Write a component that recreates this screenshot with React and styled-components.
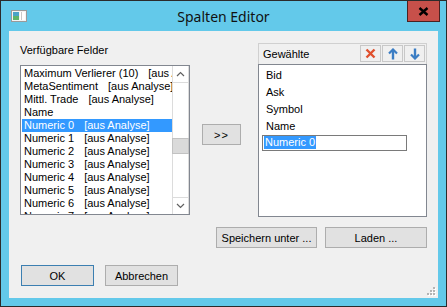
import React from "react";
import styled, { createGlobalStyle } from "styled-components";

const GlobalStyle = createGlobalStyle`
  html, body {
    margin: 0;
    padding: 0;
    background: #ffffff;
  }

  body {
    font-family: "Liberation Sans", Arial, sans-serif;
    font-size: 11px;
    color: #000;
  }
`;

const Window = styled.div`
  background: #63c9ea;
  border: 1px solid #2b2b2b;
  box-sizing: border-box;
  display: flex;
  flex-direction: column;
  height: 307px;
  width: 447px;
`;

const TitleBar = styled.div`
  align-items: center;
  display: grid;
  grid-template-columns: 1fr auto 1fr;
  height: 30px;
`;

const TitleIcon = styled.div`
  display: flex;
  padding-left: 10px;
`;

const Title = styled.div`
  color: #111;
  font-family: "Noto Sans", "Open Sans", sans-serif;
  font-size: 14px;
`;

const CloseButton = styled.div`
  align-items: center;
  align-self: start;
  background: #c7504a;
  border: 1px solid #4a2222;
  border-top: none;
  box-sizing: border-box;
  display: flex;
  height: 21px;
  justify-content: center;
  justify-self: end;
  margin-right: 6px;
  width: 33px;
`;

const Client = styled.div`
  background: #f0f0f0;
  box-sizing: border-box;
  display: flex;
  flex: 1;
  flex-direction: column;
  margin: 0 8px 8px 8px;
  padding: 12px 11px 0 11px;
  position: relative;
`;

const TopRow = styled.div`
  align-items: flex-start;
  display: flex;
`;

const LeftColumn = styled.div`
  display: flex;
  flex-direction: column;
  width: 170px;
`;

const Caption = styled.div`
  line-height: 13px;
  margin: 1px 0 8px 0;
`;

const ListBox = styled.div`
  background: #fff;
  border: 1px solid #828790;
  box-sizing: border-box;
  display: flex;
  height: 150px;
`;

const Rows = styled.div`
  flex: 1;
  overflow: hidden;
  padding: 1px 0 0 1px;
`;

const Row = styled.div`
  background: ${({ $selected }) => ($selected ? "#3399ff" : "transparent")};
  color: ${({ $selected }) => ($selected ? "#fff" : "#000")};
  height: 13px;
  line-height: 13px;
  overflow: hidden;
  padding-left: 2px;
  white-space: nowrap;
`;

const Tag = styled.span`
  margin-left: 10px;
`;

const ScrollBar = styled.div`
  background: #fff;
  border-left: 1px solid #dcdcdc;
  border-right: 1px solid #dcdcdc;
  box-sizing: border-box;
  display: flex;
  flex-direction: column;
  width: 17px;
`;

const ScrollArrow = styled.div`
  align-items: center;
  border-bottom: ${({ $down }) => ($down ? "none" : "1px solid #dcdcdc")};
  border-top: ${({ $down }) => ($down ? "1px solid #dcdcdc" : "none")};
  box-sizing: border-box;
  display: flex;
  height: 17px;
  justify-content: center;
`;

const ScrollTrack = styled.div`
  flex: 1;
  padding-top: 55px;
`;

const Thumb = styled.div`
  background: #dadada;
  border: 1px solid #c2c2c2;
  box-sizing: border-box;
  height: 16px;
  margin: 0 -1px;
`;

const Button = styled.div`
  align-items: center;
  background: #e1e1e1;
  border: 1px solid ${({ $default }) => ($default ? "#3c7fb1" : "#adadad")};
  box-sizing: border-box;
  display: flex;
  height: ${({ $height }) => $height || 21}px;
  justify-content: center;
  width: ${({ $width }) => $width}px;
`;

const MoveButton = styled(Button)`
  margin: 81px 0 0 12px;
  letter-spacing: 1px;
`;

const RightPanel = styled.div`
  display: flex;
  flex-direction: column;
  margin-left: 17px;
  width: 169px;
`;

const PanelHeader = styled.div`
  align-items: flex-start;
  border: 1px solid #d0d0d0;
  border-bottom: none;
  box-sizing: border-box;
  display: flex;
  height: 21px;
  justify-content: space-between;
  padding: 1px 1px 0 4px;
`;

const HeaderLabel = styled.div`
  line-height: 19px;
`;

const ToolGroup = styled.div`
  display: flex;
  gap: 1px;
`;

const ToolButton = styled.div`
  align-items: center;
  border: 1px solid #c8c8c8;
  box-sizing: border-box;
  display: flex;
  height: 17px;
  justify-content: center;
  width: 21px;
`;

const SelectedList = styled.div`
  background: #fff;
  border: 1px solid #828790;
  box-sizing: border-box;
  height: 153px;
  padding: 2px 0 0 3px;
`;

const SelectedRow = styled.div`
  height: 17px;
  line-height: 17px;
  padding-left: 4px;
`;

const EditBox = styled.div`
  background: #fff;
  border: 1px solid #7a7a7a;
  box-sizing: border-box;
  height: 16px;
  padding: 0 0 0 1px;
  width: 145px;
`;

const EditSelection = styled.span`
  background: #3399ff;
  color: #fff;
  display: inline-block;
  line-height: 13px;
  padding: 0 1px;
`;

const ActionRow = styled.div`
  display: flex;
  gap: 8px;
  justify-content: flex-end;
  margin-top: 10px;
`;

const DialogRow = styled.div`
  display: flex;
  gap: 11px;
  margin-top: 17px;
  padding-left: 1px;
`;

const Grip = styled.div`
  bottom: 2px;
  display: flex;
  position: absolute;
  right: 2px;
`;

const fields = [
  { name: "Maximum Verlierer (10)", tag: "[aus Analyse]" },
  { name: "MetaSentiment", tag: "[aus Analyse]" },
  { name: "Mittl. Trade", tag: "[aus Analyse]" },
  { name: "Name" },
  { name: "Numeric 0", tag: "[aus Analyse]", selected: true },
  { name: "Numeric 1", tag: "[aus Analyse]" },
  { name: "Numeric 2", tag: "[aus Analyse]" },
  { name: "Numeric 3", tag: "[aus Analyse]" },
  { name: "Numeric 4", tag: "[aus Analyse]" },
  { name: "Numeric 5", tag: "[aus Analyse]" },
  { name: "Numeric 6", tag: "[aus Analyse]" },
  { name: "Numeric 7", tag: "[aus Analyse]" },
];

const chosen = ["Bid", "Ask", "Symbol", "Name"];

const AppIcon = () => (
  <svg width="16" height="12" viewBox="0 0 16 12">
    <rect x="0.5" y="0.5" width="15" height="11" fill="#f4f4f4" stroke="#9a9a9a" />
    <rect x="2" y="2" width="6" height="8" fill="#4aa3c8" />
    <rect x="2" y="6" width="6" height="4" fill="#5fb46a" />
    <rect x="9" y="2" width="5" height="8" fill="#ffffff" />
    <rect x="10" y="2" width="1" height="8" fill="#c8c8c8" />
  </svg>
);

const CloseGlyph = () => (
  <svg width="11" height="9" viewBox="0 0 11 9">
    <path d="M1.5 1 L9.5 8 M9.5 1 L1.5 8" stroke="#000" strokeWidth="2.4" />
  </svg>
);

const Chevron = ({ down }) => (
  <svg width="9" height="6" viewBox="0 0 9 6">
    <polyline
      points={down ? "1,1 4.5,4.5 8,1" : "1,5 4.5,1.5 8,5"}
      fill="none"
      stroke="#606060"
      strokeWidth="1.2"
    />
  </svg>
);

const RemoveIcon = () => (
  <svg width="11" height="11" viewBox="0 0 11 11">
    <path d="M1.5 1.5 L9.5 9.5 M9.5 1.5 L1.5 9.5" stroke="#e0502e" strokeWidth="2.4" />
  </svg>
);

const ArrowIcon = ({ down }) => (
  <svg width="10" height="12" viewBox="0 0 10 12">
    <g transform={down ? "rotate(180 5 6)" : undefined}>
      <polyline points="1,5.5 5,1.5 9,5.5" fill="none" stroke="#3b7dc4" strokeWidth="2.2" />
      <line x1="5" y1="2" x2="5" y2="11.5" stroke="#3b7dc4" strokeWidth="2.4" />
    </g>
  </svg>
);

const GripIcon = () => (
  <svg width="10" height="10" viewBox="0 0 10 10">
    {[
      [7, 1],
      [4, 4],
      [7, 4],
      [1, 7],
      [4, 7],
      [7, 7],
    ].map(([x, y]) => (
      <g key={`${x}-${y}`}>
        <rect x={x + 1} y={y + 1} width="2" height="2" fill="#ffffff" />
        <rect x={x} y={y} width="2" height="2" fill="#b4b4b4" />
      </g>
    ))}
  </svg>
);

export default function App() {
  return (
    <>
      <GlobalStyle />
      <Window>
        <TitleBar>
          <TitleIcon>
            <AppIcon />
          </TitleIcon>
          <Title>Spalten Editor</Title>
          <CloseButton>
            <CloseGlyph />
          </CloseButton>
        </TitleBar>

        <Client>
          <TopRow>
            <LeftColumn>
              <Caption>Verfügbare Felder</Caption>
              <ListBox>
                <Rows>
                  {fields.map((f) => (
                    <Row key={f.name} $selected={f.selected}>
                      {f.name}
                      {f.tag && <Tag>{f.tag}</Tag>}
                    </Row>
                  ))}
                </Rows>
                <ScrollBar>
                  <ScrollArrow>
                    <Chevron />
                  </ScrollArrow>
                  <ScrollTrack>
                    <Thumb />
                  </ScrollTrack>
                  <ScrollArrow $down>
                    <Chevron down />
                  </ScrollArrow>
                </ScrollBar>
              </ListBox>
            </LeftColumn>

            <MoveButton $width={39}>&gt;&gt;</MoveButton>

            <RightPanel>
              <PanelHeader>
                <HeaderLabel>Gewählte</HeaderLabel>
                <ToolGroup>
                  <ToolButton>
                    <RemoveIcon />
                  </ToolButton>
                  <ToolButton>
                    <ArrowIcon />
                  </ToolButton>
                  <ToolButton>
                    <ArrowIcon down />
                  </ToolButton>
                </ToolGroup>
              </PanelHeader>
              <SelectedList>
                {chosen.map((c) => (
                  <SelectedRow key={c}>{c}</SelectedRow>
                ))}
                <EditBox>
                  <EditSelection>Numeric 0</EditSelection>
                </EditBox>
              </SelectedList>
            </RightPanel>
          </TopRow>

          <ActionRow>
            <Button $width={101}>Speichern unter ...</Button>
            <Button $width={102}>Laden ...</Button>
          </ActionRow>

          <DialogRow>
            <Button $width={73} $default>
              OK
            </Button>
            <Button $width={73}>Abbrechen</Button>
          </DialogRow>

          <Grip>
            <GripIcon />
          </Grip>
        </Client>
      </Window>
    </>
  );
}
